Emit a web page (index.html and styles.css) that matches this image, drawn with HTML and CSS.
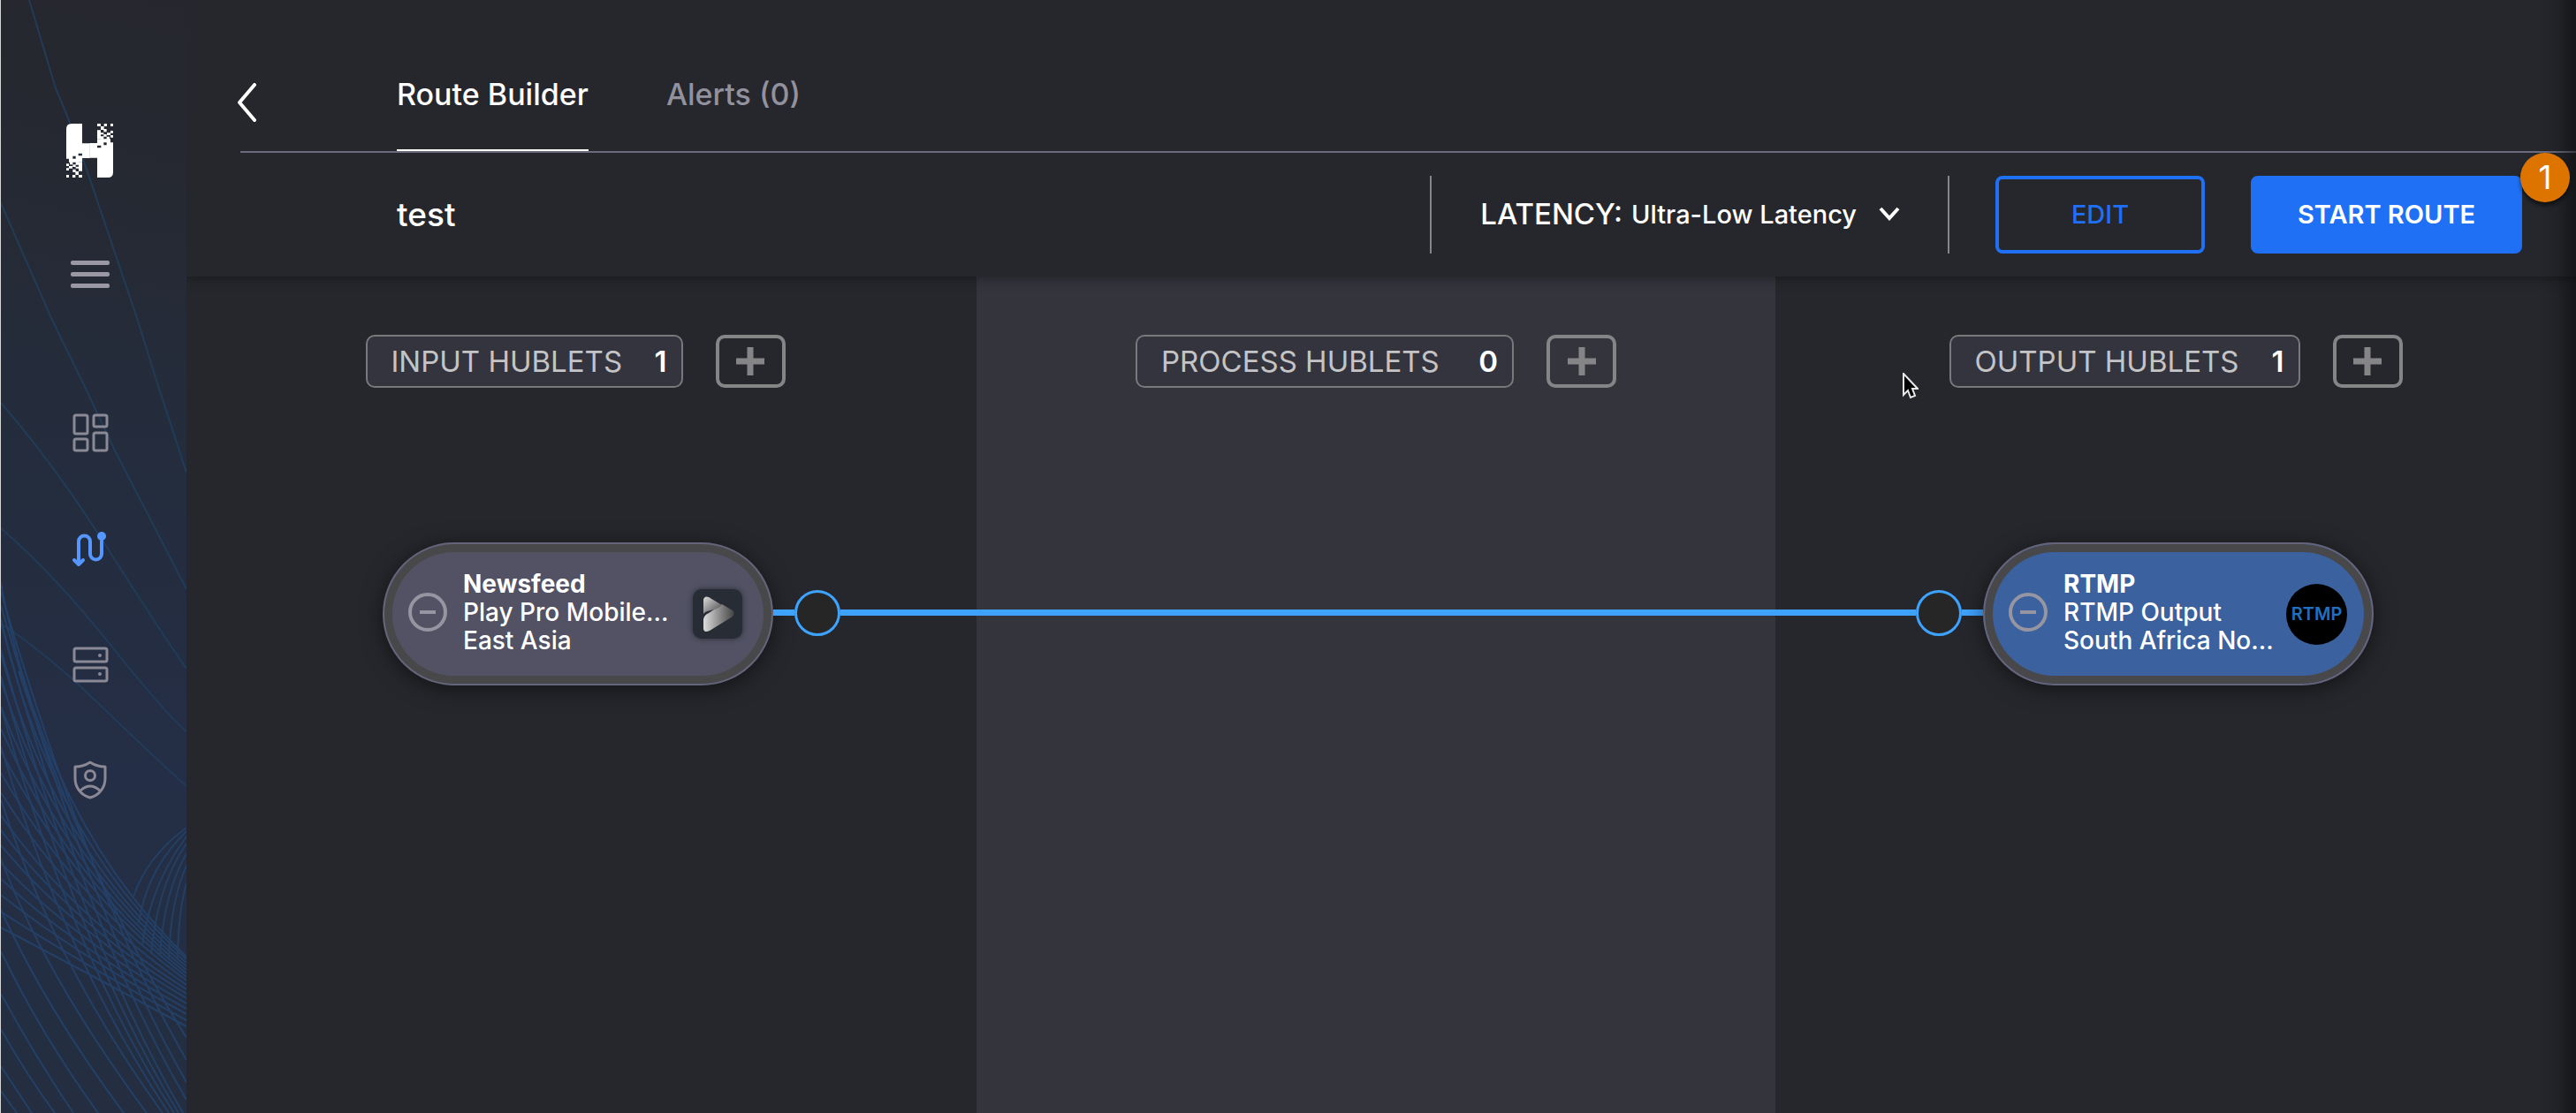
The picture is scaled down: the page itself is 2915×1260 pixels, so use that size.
FILE: index.html
```html
<!DOCTYPE html>
<html lang="en">
<head>
<meta charset="utf-8">
<title>Route Builder</title>
<link rel="stylesheet" href="styles.css">
</head>
<body>
<div class="app">
  <aside class="sidebar">
    <svg class="sidebar-art" viewBox="0 0 210 1260" preserveAspectRatio="none" aria-hidden="true">
      <g class="art-wide">
        <path d="M32 0L62 100Q80 140 110 230L154 360L179 440L210 535"/>
        <path d="M0 230L57 360L96 440L129 510L210 667"/>
        <path d="M0 456Q60 525 119 618T210 757"/>
        <path d="M0 598Q60 650 124 730T210 828"/>
        <path d="M0 706Q50 738 109 795T210 890"/>
      </g>
      <g class="art-mesh">
        <path d="M0 660Q50 930 210 1083M0 700Q55 945 210 1086M0 740Q60 960 210 1090M0 770Q65 972 210 1094M0 800Q70 984 210 1098M0 825Q75 995 210 1102M0 850Q80 1005 210 1106M0 875Q80 1015 210 1110M0 897Q80 1026 210 1115M0 923Q80 1038 210 1120M0 940Q80 1046 210 1125M0 957Q80 1054 210 1130M0 977Q80 1062 210 1136M0 995Q80 1070 210 1142M0 1013Q80 1077 210 1148M0 1032Q80 1084 210 1155M0 1050Q80 1092 210 1162"/>
        <path d="M0 1235L18 1260M0 1207L35 1260M0 1165Q28 1215 61 1260M0 1125Q38 1195 82 1260M0 1077Q46 1172 110 1260M0 1030Q50 1140 139 1260M0 972Q50 1105 165 1260M0 905Q60 1090 183 1260M0 845Q70 1080 190 1260M0 800Q80 1080 196 1260M0 765Q85 1070 201 1260M0 735Q90 1060 206 1260M0 705Q95 1050 210 1245M0 685Q98 1030 210 1225M0 670Q100 1010 210 1200M20 760Q100 1000 210 1175"/>
      </g>
      <g class="art-arc">
        <path d="M210 937Q165 970 150 1015M210 941Q165 985 156 1045M210 947Q170 1000 160 1070M210 955Q178 1000 170 1080M210 966Q185 1010 180 1080M210 980Q192 1020 190 1085M210 1000Q201 1030 200 1085"/>
      </g>
    </svg>
    <svg class="logo" viewBox="0 0 159 183" role="img" aria-label="H">
      <defs>
        <path id="half" fill-rule="evenodd" d="M79 66H105V52H150V64H159V165Q159 183 141 183H105V116H79ZM105 74H118V82H105ZM127 64H137V73H127Z"/>
        <path id="dots" d="M105 0h12v9h-12zM128 0h10v9h-10zM150 0h9v9h-9zM117 9h11v9h-11zM105 22h12v30h-12zM117 14h11v7h-11zM127 18h10v10h-10zM150 24h9v8h-9zM138 31h12v8h-12zM117 31h10v6h-10zM127 36h10v8h-10zM150 39h9v8h-9zM117 43h10v10h-10zM137 44h10v9h-10z"/>
      </defs>
      <g fill="#fff">
        <use href="#half"/><use href="#dots"/>
        <use href="#half" transform="rotate(180 79.500 91.500)"/><use href="#dots" transform="rotate(180 79.500 91.500)"/>
      </g>
    </svg>
    <button class="menu-button" type="button" aria-label="Menu"><span></span><span></span><span></span></button>
    <nav class="side-nav">
      <a href="#dashboard" aria-label="Dashboard">
        <svg viewBox="0 0 44 44"><rect x="4" y="2" width="15" height="21" rx="2"/><rect x="26" y="2" width="15" height="13" rx="2"/><rect x="4" y="29" width="15" height="13" rx="2"/><rect x="26" y="22" width="15" height="20" rx="2"/></svg>
      </a>
      <a href="#routes" class="active" aria-label="Routes">
        <svg viewBox="0 0 44 44"><path d="M9 40V14a6.500 6.500 0 0 1 13 0V28a6.500 6.500 0 0 0 13 0V8M4 35l5 5 5-5"/><circle class="solid" cx="35" cy="8" r="5"/></svg>
      </a>
      <a href="#devices" aria-label="Devices">
        <svg viewBox="0 0 44 44"><rect x="4" y="4" width="37" height="15" rx="2"/><rect x="4" y="26" width="37" height="15" rx="2"/><circle class="solid" cx="33" cy="12" r="2"/><circle class="solid" cx="33" cy="33" r="2"/></svg>
      </a>
      <a href="#security" aria-label="Security">
        <svg viewBox="0 0 44 44"><path d="M22 2Q14 7 5 7V20C5 30 11 39 22 42C33 39 39 30 39 20V7Q30 7 22 2ZM11 34Q22 24 33 34"/><circle cx="22" cy="17" r="5.500"/></svg>
      </a>
    </nav>
  </aside>

  <main class="main">
    <header class="tabs-bar">
      <button class="back" type="button" aria-label="Back"><svg viewBox="0 0 22 44"><path d="M20 2L3 22L20 42"/></svg></button>
      <nav class="tabs">
        <a href="#builder" class="tab current">Route Builder</a>
        <a href="#alerts" class="tab">Alerts (0)</a>
      </nav>
    </header>

    <section class="toolbar">
      <h1>test</h1>
      <div class="latency">
        <label for="latency">LATENCY:</label>
        <select id="latency"><option>Ultra-Low Latency</option></select>
        <svg viewBox="0 0 24 16" aria-hidden="true"><path d="M2 2L12 13L22 2"/></svg>
      </div>
      <button class="btn edit" type="button">EDIT</button>
      <div class="start-wrap">
        <button class="btn start" type="button">START ROUTE</button>
        <span class="badge">1</span>
      </div>
    </section>

    <section class="canvas">
      <div class="column input">
        <div class="chip"><span>INPUT HUBLETS</span><b>1</b></div>
        <button class="add" type="button" aria-label="Add input"><svg viewBox="0 0 32 32"><path d="M16 0V32M0 16H32"/></svg></button>
      </div>
      <div class="column process">
        <div class="chip"><span>PROCESS HUBLETS</span><b>0</b></div>
        <button class="add" type="button" aria-label="Add process"><svg viewBox="0 0 32 32"><path d="M16 0V32M0 16H32"/></svg></button>
      </div>
      <div class="column output">
        <div class="chip"><span>OUTPUT HUBLETS</span><b>1</b></div>
        <button class="add" type="button" aria-label="Add output"><svg viewBox="0 0 32 32"><path d="M16 0V32M0 16H32"/></svg></button>
      </div>

      <div class="route">
        <article class="node">
          <button class="minus" type="button" aria-label="Remove Newsfeed"></button>
          <div class="node-text"><strong>Newsfeed</strong><span>Play Pro Mobile...</span><span>East Asia</span></div>
          <svg class="play" viewBox="0 0 56 56" aria-hidden="true">
            <defs>
              <linearGradient id="g1" x1="0" y1="0" x2="1" y2="1"><stop offset="0" stop-color="#ddd"/><stop offset="1" stop-color="#444"/></linearGradient>
              <linearGradient id="g2" x1="0" y1="0" x2="1" y2="0"><stop offset="0" stop-color="#ddd"/><stop offset="1" stop-color="#444"/></linearGradient>
            </defs>
            <path fill="url(#g2)" d="M12 34Q13 29 18 27L33 17L45 24Q48 27 45 31L19 47Q12 50 12 44Z"/>
            <path fill="url(#g1)" d="M12 12Q13 7 18 9L33 18Q28 23 20 24Q14 25 12 28Z"/>
          </svg>
        </article>
        <i class="link short"></i><i class="port"></i><i class="link"></i><i class="port"></i><i class="link short"></i>
        <article class="node blue">
          <button class="minus" type="button" aria-label="Remove RTMP"></button>
          <div class="node-text"><strong>RTMP</strong><span>RTMP Output</span><span>South Africa No...</span></div>
          <div class="rtmp">RTMP</div>
        </article>
      </div>
      <svg class="pointer" viewBox="0 0 18 30" aria-hidden="true"><path d="M1 1V25L6 20L9 28L14 26L11 18H17Z"/></svg>
    </section>
  </main>
</div>
</body>
</html>
```
FILE: styles.css
```css
* { box-sizing: border-box; }
body { margin: 0; background: #26272c; color: #fff; font-family: Inter, "Open Sans", sans-serif; }
button, select { font: inherit; color: inherit; background: none; border: 0; padding: 0; margin: 0; cursor: pointer; }
a { color: inherit; text-decoration: none; }
svg { display: block; }

.app { display: flex; min-height: 100vh; }

.sidebar {
  position: relative;
  flex: 0 0 211px;
  display: flex;
  flex-direction: column;
  align-items: center;
  padding: 140px 9px 0 0;
  border-left: 1px solid #d6d6d8;
  background: linear-gradient(195deg, #26272e, #26293300 35%), linear-gradient(#262a33, #242d3e 45%, #242e46 70%, #242e40);
}
.sidebar-art { position: absolute; inset: 0; width: 100%; height: 100%; fill: none; }
.art-wide { stroke: #223b56; stroke-width: 2; }
.art-mesh { stroke: #24456f; stroke-width: 2; opacity: .8; }
.art-arc { stroke: #243f62; stroke-width: 2; }
.logo { position: relative; width: 53px; height: 61px; }
.menu-button { position: relative; display: grid; gap: 8px; width: 44px; margin-top: 94px; }
.menu-button span { height: 5px; border-radius: 2px; background: #9a98a5; }
.side-nav { position: relative; display: grid; gap: 87px; margin-top: 142px; }
.side-nav svg { width: 44px; height: 44px; fill: none; stroke: #8a8995; stroke-width: 3; stroke-linejoin: round; stroke-linecap: round; }
.side-nav .solid { fill: #8a8995; stroke: none; }
.side-nav .active svg { stroke: #5597ff; stroke-width: 4; }
.side-nav .active .solid { fill: #5597ff; }

.main { position: relative; flex: 1; min-width: 0; display: flex; flex-direction: column; }
.main::after {
  content: "";
  position: absolute;
  inset: 0 0 0 auto;
  width: 44px;
  background: linear-gradient(to right, transparent, rgba(0, 0, 0, .12) 50%, rgba(0, 0, 0, .45));
  pointer-events: none;
  z-index: 1;
}

.tabs-bar { display: flex; align-items: flex-start; margin-left: 61px; padding-top: 87px; border-bottom: 2px solid #6b6b80; }
.back { margin: 7px 159px 0 -4px; }
.back svg { width: 22px; height: 44px; fill: none; stroke: #fff; stroke-width: 4; stroke-linecap: round; stroke-linejoin: round; }
.tabs { display: flex; gap: 88px; }
.tab { padding-bottom: 42px; border-bottom: 2px solid transparent; font-size: 34px; font-weight: 500; line-height: 40px; color: #92919e; }
.tab.current { color: #fff; border-color: #fff; }

.toolbar {
  position: relative;
  z-index: 2;
  display: flex;
  align-items: center;
  gap: 52px;
  padding: 26px 61px 26px 238px;
  box-shadow: 0 2px 12px rgba(0, 0, 0, .35);
  clip-path: inset(0 0 -20px 0);
}
.toolbar h1 { margin: 0 auto 0 0; font-size: 37px; font-weight: 500; line-height: 44px; }
.latency { display: flex; align-items: center; height: 88px; padding: 0 54px 2px 55px; border: solid #85858a; border-width: 0 2px; }
.latency label { margin-right: 10px; font-size: 33px; font-weight: 500; }
.latency select { appearance: none; font-size: 29px; font-weight: 500; }
.latency svg { width: 24px; height: 16px; margin-left: 24px; fill: none; stroke: #fff; stroke-width: 4; }
.btn { height: 88px; padding-bottom: 2px; border: 4px solid #1f70f5; border-radius: 8px; font-size: 29px; font-weight: 500; }
.edit { width: 237px; color: #1f70f5; }
.start-wrap { position: relative; }
.start { width: 307px; background: #1f70f5; font-weight: 600; }
.badge {
  position: absolute;
  right: -54px;
  top: -26px;
  width: 56px;
  height: 56px;
  border-radius: 50%;
  background: #de7400;
  box-shadow: 0 4px 4px rgba(0, 0, 0, .5);
  text-align: center;
  font-size: 37px;
  line-height: 56px;
}

.canvas { position: relative; flex: 1; display: grid; grid-template-columns: 894fr 904fr 906fr; }
.column { display: flex; justify-content: center; align-items: flex-start; gap: 37px; padding-top: 66px; }
.input { padding-right: 14px; }
.process { background: #34343d; }
.chip {
  display: flex;
  align-items: center;
  justify-content: space-between;
  height: 60px;
  padding: 0 16px 0 27px;
  border: 2px solid #79797c;
  border-radius: 10px;
  background: #34343e;
  color: #c4c4c6;
  font-size: 33px;
}
.chip b { color: #fff; font-weight: 600; }
.input .chip { width: 359px; }
.process .chip { width: 428px; }
.output .chip { width: 397px; }
.add { display: grid; place-items: center; width: 79px; height: 60px; border: 4px solid #858587; border-radius: 10px; }
.add svg { width: 32px; height: 32px; stroke: #858587; stroke-width: 7; }

.route { position: absolute; top: 301px; left: 222px; right: 229px; display: flex; align-items: center; }
.node {
  display: flex;
  align-items: center;
  width: 442px;
  height: 162px;
  padding: 0 28px 5px 27px;
  border: 2px solid #64647a;
  border-radius: 81px;
  background: #525264;
  box-shadow: inset 0 0 0 9px #48484b, 0 4px 24px rgba(0, 0, 0, .5);
}
.node.blue { background: #3b619f; }
.minus { display: grid; place-items: center; width: 44px; height: 44px; border: 4px solid #9695a2; border-radius: 50%; }
.minus::after { content: ""; width: 18px; height: 4px; background: #9695a2; }
.node-text { flex: 1; display: grid; margin-left: 18px; font-size: 28px; font-weight: 500; line-height: 32px; white-space: nowrap; }
.node-text strong { font-weight: 700; }
.play, .rtmp { margin-top: 5px; }
.play { width: 56px; height: 56px; margin-right: 5px; border-radius: 10px; background: #282c34; box-shadow: 0 0 6px #282c34; }
.rtmp { width: 69px; height: 69px; border-radius: 50%; background: #000; color: #1f70c0; text-align: center; font-size: 20px; font-weight: 600; line-height: 69px; }
.link, .port { margin-bottom: 3px; }
.link { flex: 1; height: 7px; background: #3ea3ff; }
.link.short { flex: 0 0 24px; }
.port { width: 52px; height: 52px; border: 3px solid #3ea3ff; border-radius: 50%; background: #262626; }

.pointer { position: absolute; left: 1942px; top: 109px; width: 18px; height: 30px; fill: #000; stroke: #e8e8e8; stroke-width: 2; }
```
